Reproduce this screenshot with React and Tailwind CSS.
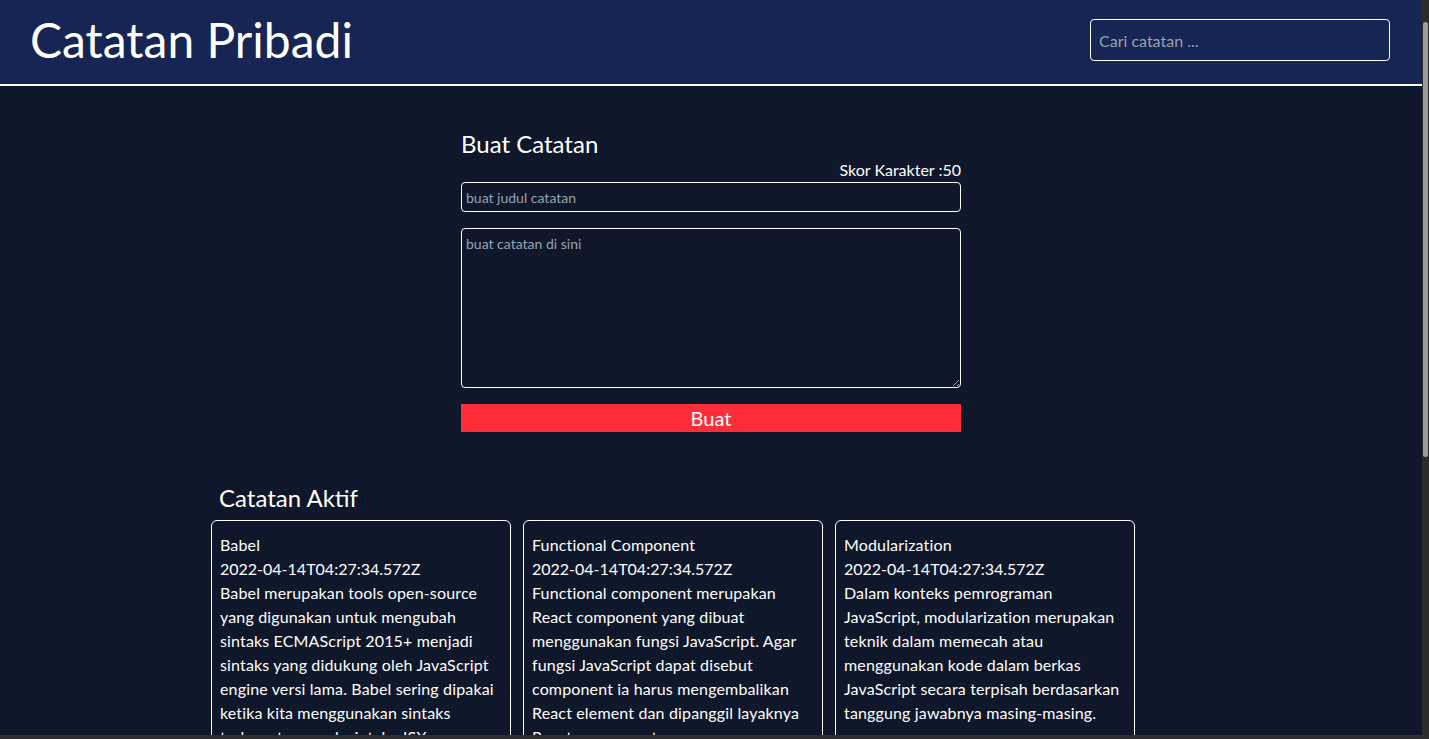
import React, { useState } from 'react';

const notes = [
    {
        id: 1,
        title: 'Babel',
        createdAt: '2022-04-14T04:27:34.572Z',
        body: 'Babel merupakan tools open-source yang digunakan untuk mengubah sintaks ECMAScript 2015+ menjadi sintaks yang didukung oleh JavaScript engine versi lama. Babel sering dipakai ketika kita menggunakan sintaks terbaru termasuk sintaks JSX.',
    },
    {
        id: 2,
        title: 'Functional Component',
        createdAt: '2022-04-14T04:27:34.572Z',
        body: 'Functional component merupakan React component yang dibuat menggunakan fungsi JavaScript. Agar fungsi JavaScript dapat disebut component ia harus mengembalikan React element dan dipanggil layaknya React component.',
    },
    {
        id: 3,
        title: 'Modularization',
        createdAt: '2022-04-14T04:27:34.572Z',
        body: 'Dalam konteks pemrograman JavaScript, modularization merupakan teknik dalam memecah atau menggunakan kode dalam berkas JavaScript secara terpisah berdasarkan tanggung jawabnya masing-masing.',
    },
];

const NoteItem = ({ note }) => (
    <div className="w-[300px] border border-white rounded-md px-2 pt-3 pb-3 text-white tracking-[0.15px]">
        <h3>{note.title}</h3>
        <p className="tracking-normal">{note.createdAt}</p>
        <p>{note.body}</p>
    </div>
);

const App = () => {
    const [title, setTitle] = useState('');
    const [body, setBody] = useState('');
    const [search, setSearch] = useState('');

    const limit = 50;

    return (
        <div className="h-[739px] flex flex-col overflow-hidden bg-[#2b2b2b]" style={{ fontFamily: 'Lato, "Noto Sans", sans-serif' }}>
            <div className="flex flex-1 min-h-0">
                <div className="flex-1 bg-[#0f172a] text-white leading-6 overflow-hidden">
                    {/* header */}
                    <header className="h-[86px] bg-[#172554] border-b-2 border-white flex items-center justify-between pl-[30px] pr-[32px]">
                        <h1 className="text-[48px] leading-none pb-1">Catatan Pribadi</h1>
                        <input
                            type="text"
                            value={search}
                            onChange={e => setSearch(e.target.value)}
                            placeholder="Cari catatan ..."
                            className="w-[300px] h-[42px] border border-white rounded px-2 bg-transparent text-white placeholder:text-gray-400 outline-none -mt-[4px]"
                        />
                    </header>

                    {/* form */}
                    <div className="w-[500px] mx-auto mt-[44px] flex flex-col">
                        <h2 className="text-2xl leading-7">Buat Catatan</h2>
                        <p className="text-right">Skor Karakter :{limit - title.length}</p>
                        <input
                            type="text"
                            value={title}
                            onChange={e => setTitle(e.target.value.slice(0, limit))}
                            placeholder="buat judul catatan"
                            className="h-[30px] border border-white rounded px-1 text-sm bg-transparent placeholder:text-gray-400 outline-none"
                        />
                        <textarea
                            value={body}
                            onChange={e => setBody(e.target.value)}
                            placeholder="buat catatan di sini"
                            className="mt-4 h-[160px] border border-white rounded px-1 pt-[5px] text-sm bg-transparent placeholder:text-gray-400 outline-none"
                        />
                        <button className="mt-4 h-[28px] bg-[#ff2d3a] text-white text-xl leading-none">Buat</button>
                    </div>

                    {/* notes */}
                    <div className="w-[1000px] mx-auto mt-[52px]">
                        <h2 className="text-2xl leading-7 ml-2">Catatan Aktif</h2>
                        <div className="flex flex-wrap gap-3 mt-[8px]">
                            {notes.map(note => (
                                <NoteItem key={note.id} note={note} />
                            ))}
                        </div>
                    </div>
                </div>

                {/* scrollbar */}
                <div className="w-[7px] bg-[#2b2b2b] flex flex-col items-center pt-[22px]">
                    <div className="w-[5px] h-[435px] bg-[#9b9b9b] rounded-sm"></div>
                </div>
            </div>
            <div className="h-[4px] bg-[#2e2e2e]"></div>
        </div>
    );
};

export default App;
